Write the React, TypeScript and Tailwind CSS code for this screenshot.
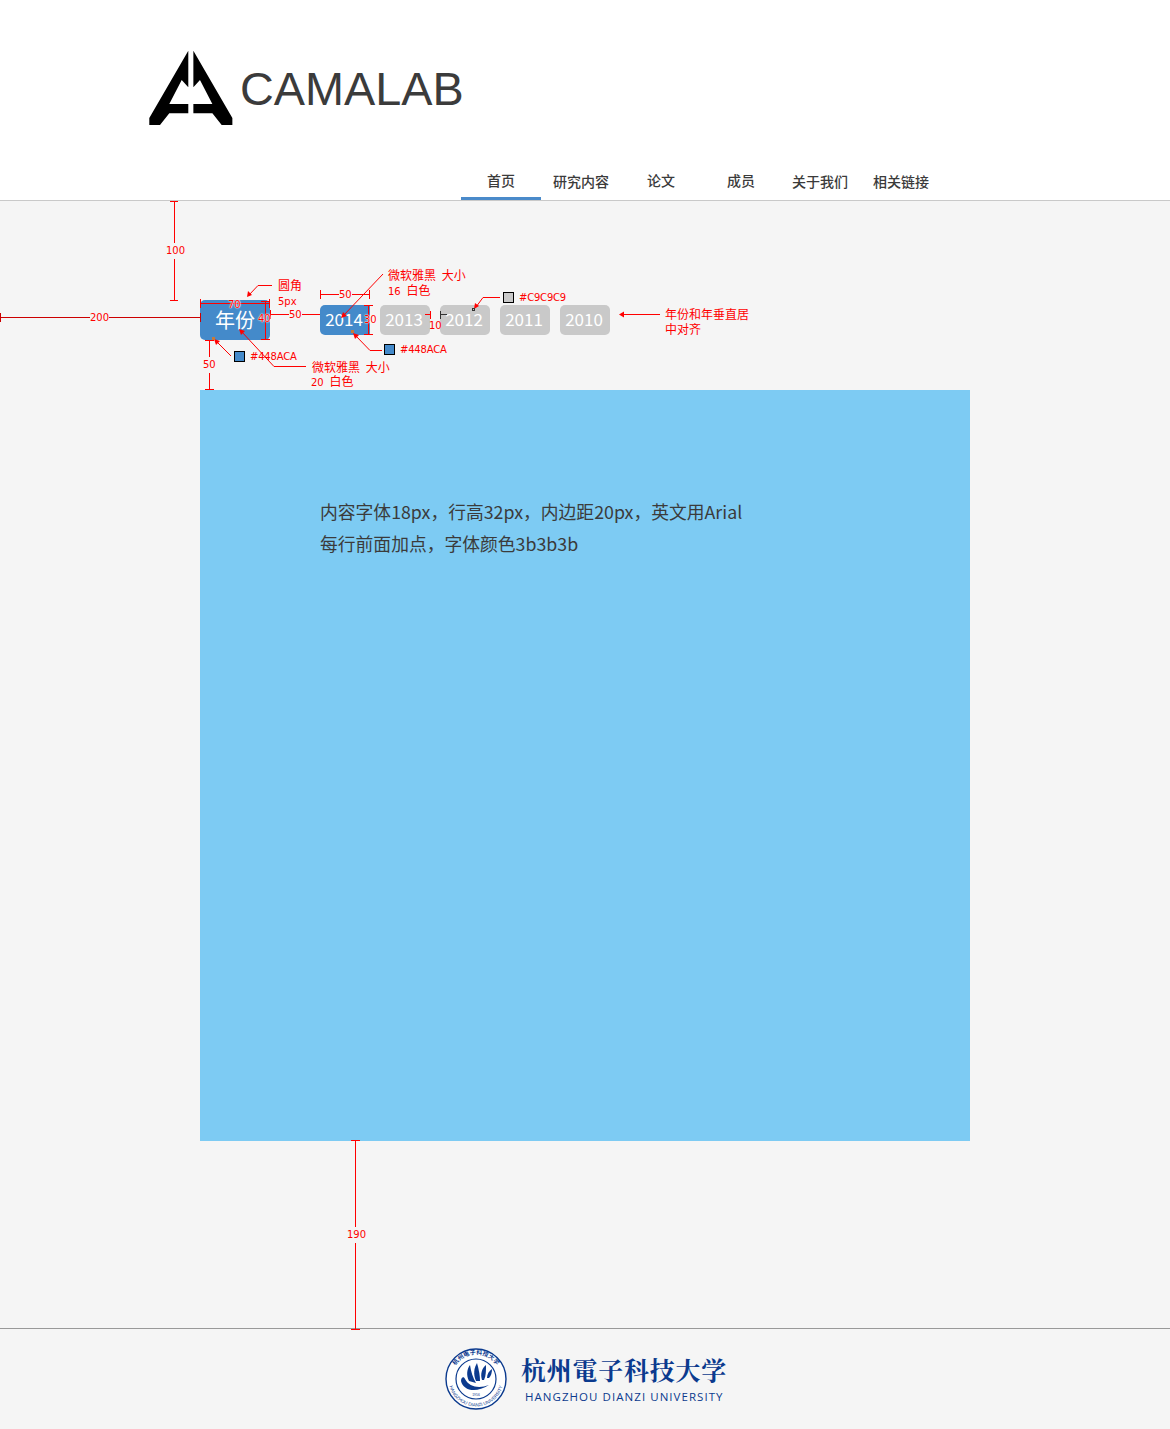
import type { ReactNode } from "react";

const navItems = [
  { label: "首页", active: true, cls: "" },
  { label: "研究内容", active: false, cls: "pt-[1px]" },
  { label: "论文", active: false, cls: "" },
  { label: "成员", active: false, cls: "" },
  { label: "关于我们", active: false, cls: "pt-[1px] pr-[2px]" },
  { label: "相关链接", active: false, cls: "pt-[1px]" },
];

const years = ["2013", "2012", "2011", "2010"];

const cjk = "font-['Liberation_Sans','Noto_Sans_CJK_SC',sans-serif]";
const halo = "[text-shadow:0_0_1px_#fff,0_0_1px_#fff,0_0_2px_#fff]";

// red spec notes, placed on the design canvas
const notes: { text: ReactNode; cls: string }[] = [
  { text: "100", cls: "left-[166px] top-[243px] bg-[#f5f5f5]" },
  { text: "200", cls: "left-[90px] top-[310px] bg-[#f5f5f5]" },
  { text: "70", cls: `left-[228px] top-[297px] ${halo}` },
  { text: "40", cls: `left-[258px] top-[311px] ${halo}` },
  { text: "50", cls: "left-[289px] top-[307px] bg-[#f5f5f5] h-[14px]" },
  { text: "50", cls: "left-[339px] top-[287px] bg-[#f5f5f5] h-[14px]" },
  { text: "30", cls: `left-[364px] top-[312px] ${halo}` },
  { text: "10", cls: "left-[429px] top-[318px]" },
  { text: "50", cls: "left-[203px] top-[357px] bg-[#f5f5f5]" },
  { text: "190", cls: "left-[347px] top-[1227px] bg-[#f5f5f5]" },
  { text: "5px", cls: "left-[278px] top-[294px]" },
  { text: "圆角", cls: "left-[278px] top-[278px] text-[12px]" },
  { text: "微软雅黑 大小", cls: "left-[388px] top-[268px] text-[12px]" },
  { text: <><span className="text-[10px]">16</span> 白色</>, cls: "left-[388px] top-[283px] text-[12px]" },
  { text: "微软雅黑 大小", cls: "left-[312px] top-[360px] text-[12px]" },
  { text: <><span className="text-[10px]">20</span> 白色</>, cls: "left-[311px] top-[374px] text-[12px]" },
  { text: "#448ACA", cls: "left-[250px] top-[349px] tracking-[-0.2px]" },
  { text: "#448ACA", cls: "left-[400px] top-[342px] tracking-[-0.2px]" },
  { text: "#C9C9C9", cls: "left-[519px] top-[290px] tracking-[-0.2px]" },
  { text: "年份和年垂直居", cls: "left-[665px] top-[307px] text-[12px]" },
  { text: "中对齐", cls: "left-[665px] top-[322px] text-[12px]" },
];

function Logo() {
  const half =
    "M39.3 0.7 L0.3 68 L0.3 75 L11 75 L20.3 63.3 L39.3 63.3 L39.3 54 L20.3 54 L32.7 30 L39.3 37.3 Z";
  return (
    <svg width="84" height="75" viewBox="0 0 84 75" className="shrink-0">
      <path d={half} fill="#000" />
      <path d={half} fill="#000" transform="translate(83.67 0) scale(-1 1)" />
    </svg>
  );
}

function Seal() {
  return (
    <svg width="62" height="62" viewBox="0 0 62 62" className="shrink-0 overflow-visible">
      <defs>
        <path id="seal-top" d="M6.5 31 A24.5 24.5 0 0 1 55.5 31" />
        <path id="seal-bottom" d="M3.5 31 A27.5 27.5 0 0 0 58.5 31" />
      </defs>
      <circle cx="31" cy="31" r="30" fill="#fff" stroke="#0b3a8e" strokeWidth="1.4" />
      <circle cx="31" cy="31" r="20" fill="#fff" stroke="#0b3a8e" strokeWidth="1.2" />
      <text fontSize="6" fill="#0b3a8e" fontWeight="700" fontFamily="'Noto Sans CJK SC',sans-serif">
        <textPath href="#seal-top" startOffset="50%" textAnchor="middle">杭州电子科技大学</textPath>
      </text>
      <text fontSize="4.6" fill="#0b3a8e" fontFamily="'Liberation Sans',sans-serif">
        <textPath href="#seal-bottom" startOffset="50%" textAnchor="middle">HANGZHOU DIANZI UNIVERSITY</textPath>
      </text>
      <path d="M16 33 C18 42 30 46 44 37 C34 41 24 39 20 31 C19 28 16 29 16 33 Z" fill="#0b3a8e" />
      <path d="M24 33 C21 27 22 21 25 17 C26 24 28 30 31 35 Z" fill="#0b3a8e" />
      <path d="M31 33 C28 26 29 20 32 15 C34 22 35 28 35 33 Z" fill="#0b3a8e" />
      <path d="M37 32 C35 26 37 20 41 17 C41 23 41 28 39 32 Z" fill="#0b3a8e" />
      <path d="M42 30 C42 26 44 23 47 21 C47 25 46 28 44 30 Z" fill="#0b3a8e" />
      <text x="31" y="47.5" fontSize="3.4" textAnchor="middle" fill="#0b3a8e" fontFamily="'Liberation Sans',sans-serif">1956</text>
    </svg>
  );
}

function Annotations() {
  return (
    <div className="absolute inset-0 pointer-events-none">
      <svg width="1170" height="1429" className="absolute left-0 top-0">
        <g stroke="#f00" strokeWidth="1" fill="none" shapeRendering="crispEdges">
          <path d="M174.5 201V300M170 201.5H178M170 300.5H178" />
          <path d="M0 317.5H200M0.5 313V322M200.5 313V322" stroke="#c00" />
          <path d="M200 303.5H270M200.5 299V308M269.5 299V308" />
          <path d="M265.5 301V339M261 301.5H270M261 339.5H270" />
          <path d="M270 314.5H320M270.5 310V319" />
          <path d="M320 294.5H370M320.5 290V299M369.5 290V299" />
          <path d="M368.5 305V335M364 305.5H373M364 334.5H373" />
          <path d="M425 314.5H431M430.5 311V319" />
          <path d="M209.5 340V390M205 340.5H214M205 389.5H214" />
          <path d="M355.5 1140V1329M351 1140.5H360M351 1329.5H360" />
          <path d="M382 350.5H370" />
          <path d="M306 366.5H274" />
          <path d="M272 285.5H258" />
          <path d="M500 297.5H483" />
          <path d="M660 314.5H620" />
        </g>
        <path d="M440 314.5H447M440.5 311V319" stroke="#333" strokeWidth="1" shapeRendering="crispEdges" />
        <g stroke="#f00" strokeWidth="1" fill="none">
          <path d="M258 285.5 L249 295" />
          <path d="M383 274 L343 316" />
          <path d="M370 350.5 L355 335" />
          <path d="M231 356 L216 341" />
          <path d="M274 366.5 L241 331" />
          <path d="M483 297.5 L476 307" />
        </g>
        <g fill="#f00">
          <path d="M247 297 L248 291 L252 295 Z" />
          <path d="M341 318 L343 312 L347 316 Z" />
          <path d="M353 333 L359 335 L355 339 Z" />
          <path d="M214 339 L220 341 L216 345 Z" />
          <path d="M239 329 L245 331 L241 335 Z" />
          <path d="M474 309 L475 303 L479 306 Z" />
          <path d="M619 314.5 L624 311.5 L624 317.5 Z" />
        </g>
        <rect x="351" y="330" width="3" height="3" fill="#c77a3a" />
        <rect x="212" y="337" width="3" height="3" fill="#c77a3a" />
        <rect x="472.5" y="308.5" width="2" height="2" fill="none" stroke="#333" strokeWidth="1" />
      </svg>
      <span className="absolute left-[234px] top-[351px] h-[11px] w-[11px] border border-black bg-[#448aca]" />
      <span className="absolute left-[384px] top-[344px] h-[11px] w-[11px] border border-black bg-[#448aca]" />
      <span className="absolute left-[503px] top-[292px] h-[11px] w-[11px] border border-black bg-[#c9c9c9]" />
      {notes.map((n, i) => (
        <span
          key={i}
          className={`absolute whitespace-pre text-[10px] leading-4 [word-spacing:2px] text-[#f00] font-['DejaVu_Sans','Noto_Sans_CJK_SC',sans-serif] ${n.cls}`}
        >
          {n.text}
        </span>
      ))}
    </div>
  );
}

export default function App() {
  return (
    <div className={`relative w-[1170px] h-[1429px] overflow-hidden bg-[#f5f5f5] ${cjk}`}>
      <header className="h-[201px] bg-white border-b border-[#c9c9c9] flex flex-col">
        <div className="flex items-start pl-[149px] pt-[50px]">
          <Logo />
          <span className="ml-[7px] mt-[9px] text-[46.8px] leading-[60px] text-[#3b3b3b]">CAMALAB</span>
        </div>
        <nav className="flex pl-[461px] mt-auto">
          {navItems.map((item) => (
            <a
              key={item.label}
              className={`w-20 h-[28px] flex justify-center text-sm font-medium leading-[18px] text-[#3b3b3b] ${item.cls} ${
                item.active ? "border-b-[3px] border-[#4a8aca]" : ""
              }`}
            >
              {item.label}
            </a>
          ))}
        </nav>
      </header>

      <main className="pt-[99px] pl-[200px] pb-[187px]">
        <div className="flex items-center">
          <div className="w-[70px] h-10 rounded-[5px] bg-[#448aca] text-white text-xl pt-[2px] flex items-center justify-center">
            年份
          </div>
          <div className="ml-[50px] flex gap-[10px] text-white text-[17px] font-['Noto_Sans_CJK_SC',sans-serif]">
            <div className="w-[50px] h-[30px] rounded-l-[5px] bg-[#448aca] pb-[2px] pr-[2px] flex items-center justify-center">
              2014
            </div>
            {years.map((y) => (
              <div
                key={y}
                className="w-[50px] h-[30px] rounded-[5px] bg-[#c9c9c9] pb-[2px] pr-[2px] flex items-center justify-center"
              >
                {y}
              </div>
            ))}
          </div>
        </div>

        <section className="mt-[50px] w-[770px] h-[751px] bg-[#7dcbf3] pl-[120px] pt-[105px] text-[17.8px] leading-8 text-[#3b3b3b] font-['Noto_Sans_CJK_SC',sans-serif]">
          <p>内容字体18px，行高32px，内边距20px，英文用Arial</p>
          <p>每行前面加点，字体颜色3b3b3b</p>
        </section>
      </main>

      <footer className="h-[101px] border-t border-[#999] flex items-center justify-center gap-[14px] pl-[2px]">
        <Seal />
        <div className="flex flex-col items-start">
          <span className="text-[25px] leading-[32px] font-bold tracking-[0.75px] text-[#0b3a8e] font-['Noto_Serif_CJK_SC','Noto_Sans_CJK_SC',sans-serif]">
            杭州電子科技大学
          </span>
          <span className="mt-[4px] ml-[4px] text-[11.5px] leading-4 font-medium tracking-[1.05px] text-[#0b3a8e] font-['Open_Sans',sans-serif]">
            HANGZHOU DIANZI UNIVERSITY
          </span>
        </div>
      </footer>

      <Annotations />
    </div>
  );
}
